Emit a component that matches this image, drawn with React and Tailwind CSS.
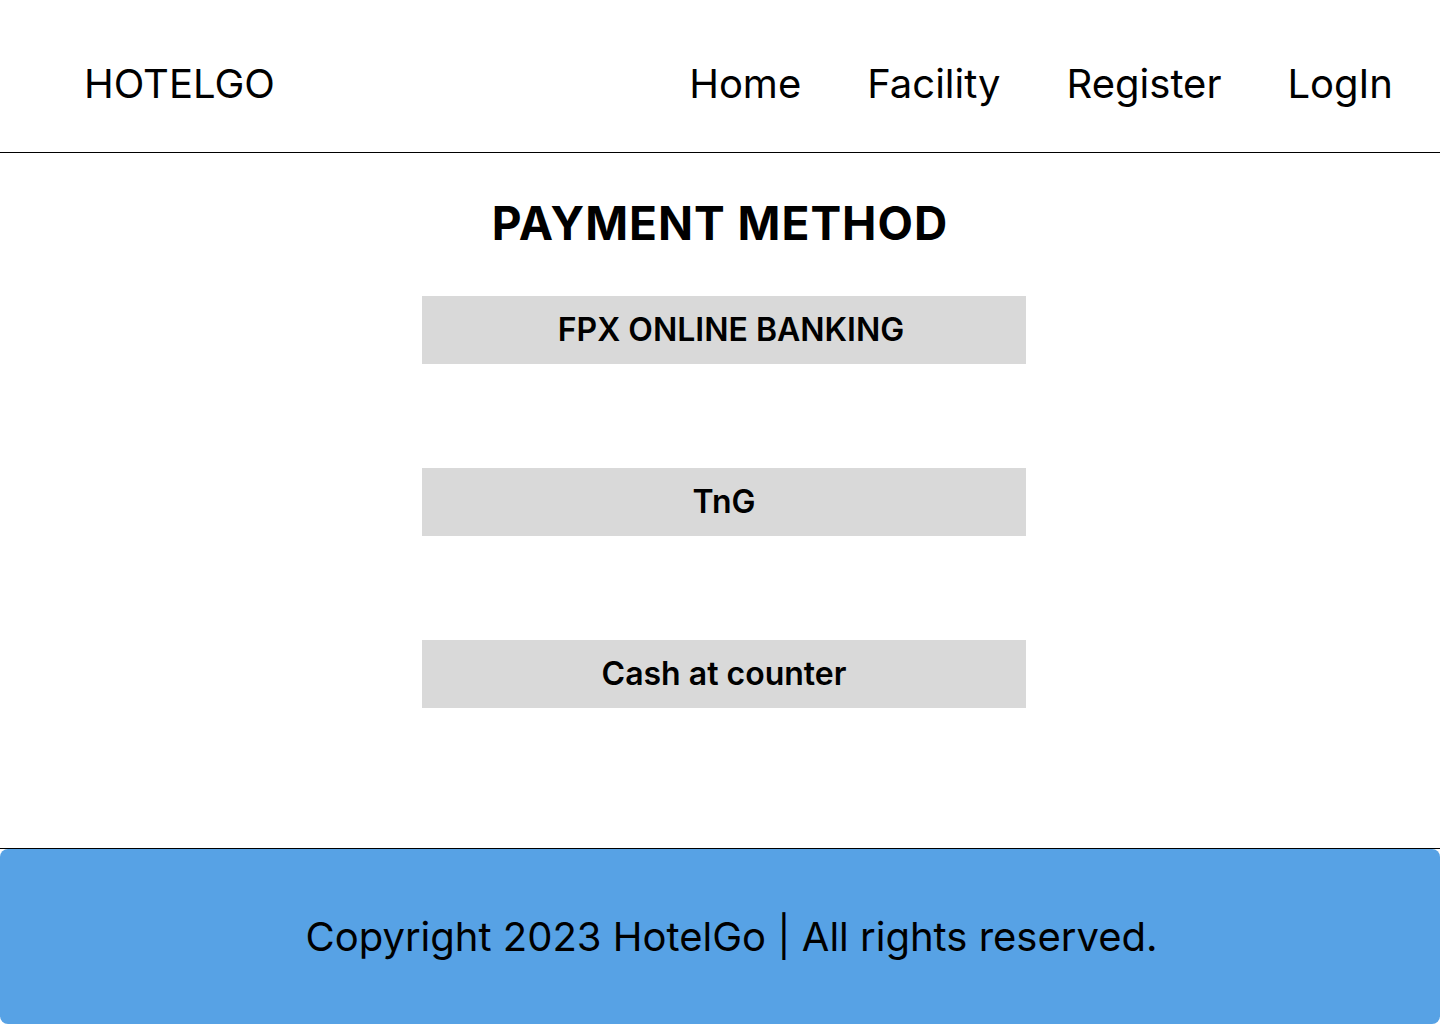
const navLinks = ["Home", "Facility", "Register", "LogIn"];
const methods = [
  { label: "FPX ONLINE BANKING", shift: "pl-[14px]" },
  { label: "TnG", shift: "" },
  { label: "Cash at counter", shift: "" },
];

const App = () => {
  return (
    <div className="min-h-screen w-[1440px] bg-white text-black font-['Inter',sans-serif] flex flex-col">
      <header className="h-[153px] pt-[16px] border-b border-black flex items-center justify-between pl-[84px] pr-[47px]">
        <div className="text-[40px] leading-none">HOTELGO</div>
        <nav className="flex gap-[66px]">
          {navLinks.map((link) => (
            <a key={link} href="#" className="text-[40px] leading-none">
              {link}
            </a>
          ))}
        </nav>
      </header>

      <main className="h-[695px] flex flex-col items-center">
        <h1 className="mt-[46px] text-[46px] leading-[48px] font-bold tracking-[1px]">PAYMENT METHOD</h1>
        <div className="mt-[49px] ml-[8px] flex flex-col gap-[104px]">
          {methods.map((m) => (
            <button
              key={m.label}
              className={`w-[604px] h-[68px] bg-[#d9d9d9] text-[32px] font-semibold flex items-center justify-center ${m.shift}`}
            >
              {m.label}
            </button>
          ))}
        </div>
      </main>

      <footer className="border-t border-black">
        <div className="h-[175px] pl-[23px] bg-[#57a2e5] rounded-lg flex items-center justify-center">
          <p className="text-[40px] leading-none">Copyright 2023 HotelGo | All rights reserved.</p>
        </div>
      </footer>
    </div>
  );
};

export default App;
